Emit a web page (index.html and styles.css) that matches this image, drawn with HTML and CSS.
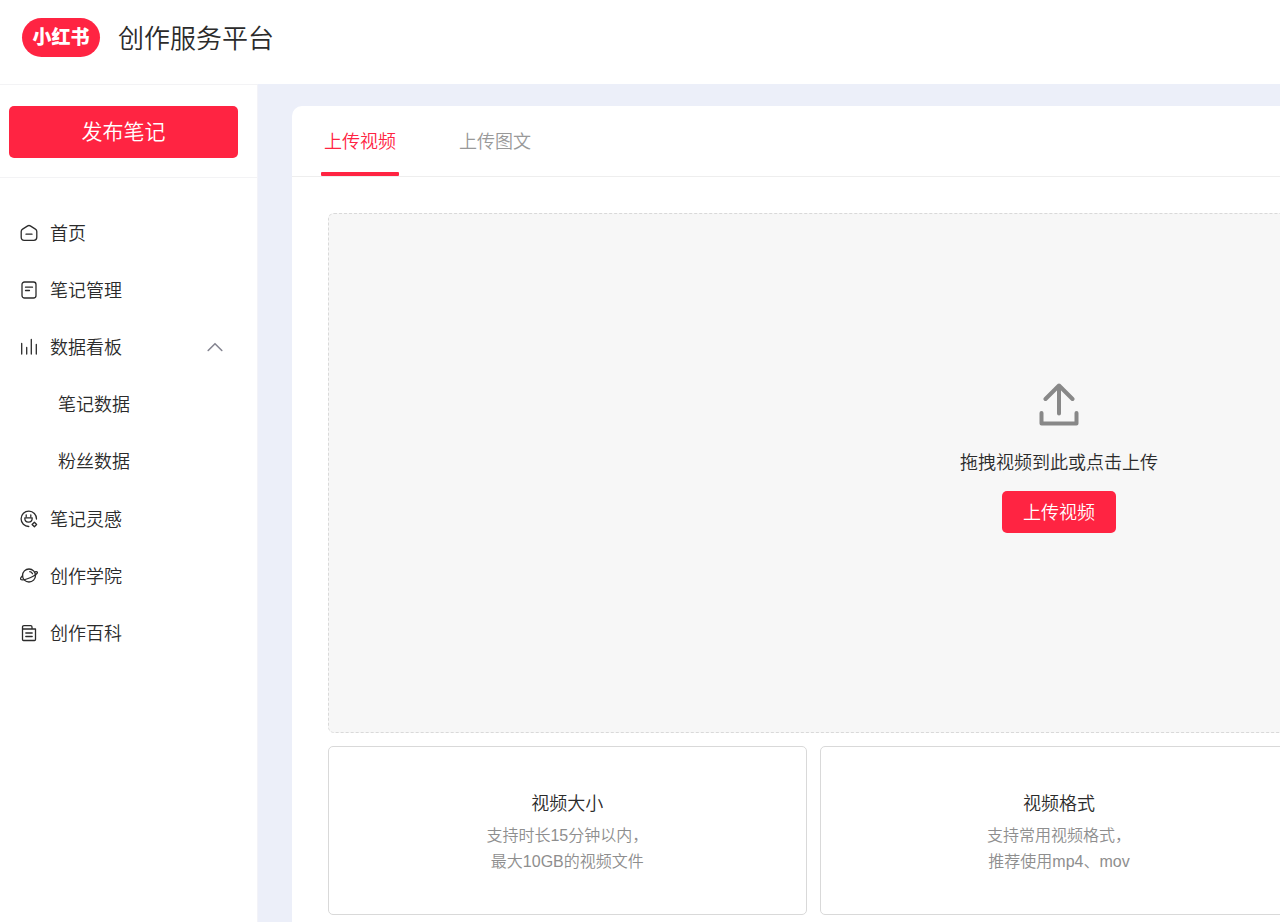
FILE: index.html
```html
<!DOCTYPE html>
<html lang="zh-CN">
<head>
<meta charset="utf-8">
<meta name="viewport" content="width=device-width, initial-scale=1">
<title>创作服务平台</title>
<link rel="stylesheet" href="styles.css">
</head>
<body>
<header class="header">
  <span class="logo">小红书</span>
  <h1 class="title">创作服务平台</h1>
</header>
<div class="layout">
  <aside class="sidebar">
    <div class="publish"><button class="btn publish-btn" type="button">发布笔记</button></div>
    <nav>
      <ul class="menu">
        <li><a class="item" href="#">
          <svg class="icon" viewBox="0 0 18 18"><path d="M2.600 5.100 7.700 1.900q1.300-.8 2.600 0l5.100 3.200q1.400.9 1.400 2.500v5.700q0 3-3 3H4.200q-3 0-3-3V7.600q0-1.600 1.400-2.500ZM6 10.200h6"/></svg>首页</a></li>
        <li><a class="item" href="#">
          <svg class="icon" viewBox="0 0 18 18"><rect x="2" y="1" width="14" height="16" rx="2.500"/><path d="M5.500 6.200h7M5.500 9.500h4"/></svg>笔记管理</a></li>
        <li>
          <button class="item" type="button" aria-expanded="true">
            <svg class="icon" viewBox="0 0 18 18"><path d="M1.700 5.500V16M6.700 9.500V16M11.300 1.500V16M16.300 6.500V16"/></svg>数据看板
            <svg class="chevron" viewBox="0 0 16 10"><path d="M1.200 8.500 8 1.700l6.800 6.800"/></svg>
          </button>
          <ul class="submenu">
            <li><a class="item" href="#">笔记数据</a></li>
            <li><a class="item" href="#">粉丝数据</a></li>
          </ul>
        </li>
        <li><a class="item" href="#">
          <svg class="icon" viewBox="0 0 18 18"><path d="M8.800 16.500A7.700 7.700 0 1 1 16.500 9M6.200 4.800v1.700M10.800 4.800v1.700M4.800 7.800h7.400q.2 4.300-3.700 4.300T4.800 7.800ZM14.400 12.200l2.200 2.300-2.200 2.300-2.300-2.300Z"/></svg>笔记灵感</a></li>
        <li><a class="item" href="#">
          <svg class="icon" viewBox="0 0 18 18"><circle cx="9" cy="8.500" r="6.500"/><path d="M2.600 8.800C.9 10.300.2 11.500.6 12.100c.9 1.300 5.600.3 10.100-1.600 4.300-1.800 7.200-4.200 6.700-5.300q-.4-.8-2.500-.4M9.800 4.700q1.900.3 2.700 2"/></svg>创作学院</a></li>
        <li><a class="item" href="#">
          <svg class="icon" viewBox="0 0 18 18"><path d="M2.500 5V3.200Q2.500 1.700 4 1.700h6.700q1.300 0 1.300 1.300V5M2.500 5h13v10.500q0 1-1 1h-11q-1 0-1-1ZM5.800 9h6.400M5.800 12.500h6.400"/></svg>创作百科</a></li>
      </ul>
    </nav>
  </aside>
  <main class="main">
    <section class="panel">
      <div class="tabs" role="tablist">
        <button class="tab active" type="button" role="tab" aria-selected="true">上传视频</button>
        <button class="tab" type="button" role="tab" aria-selected="false">上传图文</button>
      </div>
      <div class="content">
        <div class="dropzone">
          <svg class="upload-icon" viewBox="0 0 40 44"><path d="M20 2.500v28M6.500 16 20 2.500 33.500 16M2.500 30v10.500h35V30"/></svg>
          <p class="hint">拖拽视频到此或点击上传</p>
          <button class="btn upload-btn" type="button">上传视频</button>
        </div>
        <div class="cards">
          <article class="card">
            <h2 class="card-title">视频大小</h2>
            <p class="card-text">支持时长15分钟以内，<br>最大10GB的视频文件</p>
          </article>
          <article class="card">
            <h2 class="card-title">视频格式</h2>
            <p class="card-text">支持常用视频格式，<br>推荐使用mp4、mov</p>
          </article>
        </div>
      </div>
    </section>
  </main>
</div>
</body>
</html>
```
FILE: styles.css
```css
* { box-sizing: border-box; }

body {
  margin: 0;
  min-height: 100vh;
  display: flex;
  flex-direction: column;
  background: #fff;
  color: #2b2b2b;
  font: 18px/26px "Liberation Sans", "Noto Sans CJK SC", sans-serif;
  font-weight: 350;
}

h1, h2, p, ul { margin: 0; padding: 0; font-weight: inherit; }
ul { list-style: none; }
button { border: 0; background: none; font: inherit; color: inherit; cursor: pointer; }
a { color: inherit; text-decoration: none; }
svg { fill: none; stroke: currentColor; stroke-linecap: round; stroke-linejoin: round; }

.header {
  display: flex;
  align-items: flex-start;
  gap: 18px;
  height: 84px;
  padding: 18px 22px 0;
}

.logo {
  width: 78px;
  border-radius: 20px;
  background: #ff2442;
  color: #fff;
  font-size: 19px;
  font-weight: 900;
  line-height: 39px;
  text-align: center;
}

.title { font-size: 26px; line-height: 42px; }

.layout { flex: 1; display: flex; }

.sidebar { flex: 0 0 258px; border-top: 1px solid #f3f3f5; border-right: 1px solid #f3f3f8; }

.btn { border-radius: 5px; background: #ff2442; color: #fff; }

.publish { padding: 21px 19px 19px 9px; border-bottom: 1px solid #f3f3f5; }
.publish-btn { display: block; width: 100%; height: 52px; font-size: 21px; }

.menu { padding-top: 27px; }
.item {
  display: flex;
  align-items: center;
  width: 100%;
  height: 57px;
  padding: 1px 34px 0 20px;
  text-align: left;
}
.icon { width: 18px; height: 18px; margin: 0 12px 3px 0; stroke-width: 1.3; }
.chevron { width: 16px; height: 10px; margin: 0 0 3px auto; color: #858591; stroke-width: 1.6; }
.submenu { padding-bottom: 1px; }
.submenu .item { padding-left: 58px; }

.main { flex: 1; min-width: 0; overflow: hidden; padding: 22px 0 0 34px; background: #eceff9; }

.panel { min-width: 1534px; height: 100%; border-radius: 10px 10px 0 0; background: #fff; }

.tabs { display: flex; gap: 57px; padding: 0 29px; border-bottom: 1px solid #eee; }
.tab {
  position: relative;
  height: 70px;
  padding: 2px 3px 0;
  color: #999;
}
.tab.active { color: #ff2442; }
.tab.active::after {
  content: "";
  position: absolute;
  inset: auto 0 0;
  height: 4px;
  border-radius: 1px;
  background: #ff2442;
}

.content { padding: 36px 36px 7px; }

.dropzone {
  display: flex;
  flex-direction: column;
  align-items: center;
  min-height: 520px;
  padding-top: 169px;
  border: 1px dashed #d9d9d9;
  border-radius: 6px;
  background: #f7f7f7;
}
.upload-icon { width: 40px; height: 44px; color: #888; stroke-width: 4; }
.hint { margin: 23px 0 15px; }
.upload-btn { height: 42px; padding: 1px 21px 0; }

.cards { display: grid; grid-template-columns: repeat(3, 1fr); gap: 13px; margin-top: 13px; }
.card {
  padding: 44px 20px 39px;
  border: 1px solid #d9d9d9;
  border-radius: 5px;
  text-align: center;
}
.card-title { margin-bottom: 6px; font-size: 18px; }
.card-text { color: #8e8e8e; font-size: 16px; }
```
